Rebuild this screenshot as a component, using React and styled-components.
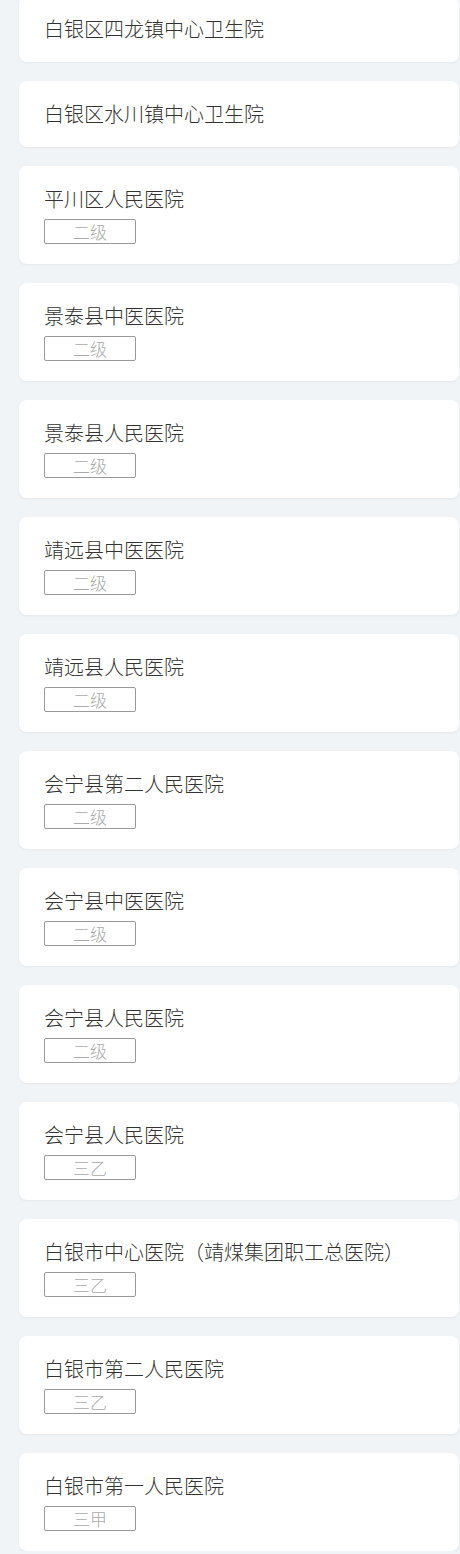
import React from "react";
import styled, { createGlobalStyle } from "styled-components";

const GlobalStyle = createGlobalStyle`
    body {
        margin:0;
        background:#f0f4f7;
        font-family:"Noto Sans CJK SC", "Noto Sans", sans-serif;
    }
`
const List = styled.div`
    display:flex;
    flex-direction:column;
    gap:19px;
    padding:0 1px 0 19px;
    margin-top:-4px;
`
const Card = styled.div`
    background:#fff;
    border-radius:8px;
    box-shadow:0 1px 3px rgba(0,0,0,0.05);
    padding:20px 25px;
    display:flex;
    flex-direction:column;
    align-items:flex-start;
    gap:7px;
`
const Name = styled.div`
    font-size:20px;
    font-weight:300;
    line-height:26px;
    color:#333;
`
const Level = styled.span`
    box-sizing:border-box;
    width:92px;
    height:25px;
    border:1px solid #999;
    border-radius:2px;
    color:#aaa;
    font-size:17px;
    font-weight:300;
    line-height:23px;
    text-align:center;
`

const hospitals = [
    { name: "白银区四龙镇中心卫生院" },
    { name: "白银区水川镇中心卫生院" },
    { name: "平川区人民医院", level: "二级" },
    { name: "景泰县中医医院", level: "二级" },
    { name: "景泰县人民医院", level: "二级" },
    { name: "靖远县中医医院", level: "二级" },
    { name: "靖远县人民医院", level: "二级" },
    { name: "会宁县第二人民医院", level: "二级" },
    { name: "会宁县中医医院", level: "二级" },
    { name: "会宁县人民医院", level: "二级" },
    { name: "会宁县人民医院", level: "三乙" },
    { name: "白银市中心医院（靖煤集团职工总医院）", level: "三乙" },
    { name: "白银市第二人民医院", level: "三乙" },
    { name: "白银市第一人民医院", level: "三甲" },
]

const App = () => {
    return (
        <>
            <GlobalStyle />
            <List>
                {hospitals.map((h, i) => (
                    <Card key={i}>
                        <Name>{h.name}</Name>
                        {h.level && <Level>{h.level}</Level>}
                    </Card>
                ))}
            </List>
        </>
    )
}

export default App;
